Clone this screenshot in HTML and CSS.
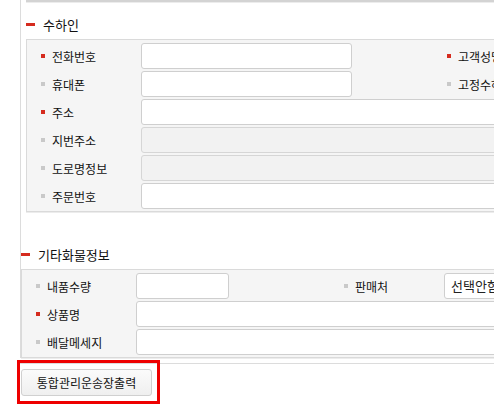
FILE: index.html
```html
<!DOCTYPE html>
<html lang="ko">
<head>
    <meta charset="UTF-8">
    <meta name="viewport" content="width=device-width, initial-scale=1.0">
    <title>수하인 정보</title>
    <link rel="stylesheet" href="styles.css">
</head>
<body>
    <div class="panel">
        <div class="topbar"></div>

        <div class="section section-inset">
            <h2 class="sec-title">수하인</h2>
            <div class="form-box">
                <div class="row">
                    <label class="lbl req">전화번호</label>
                    <div class="cell cell-phone"><input type="text" class="inp inp-phone"></div>
                    <label class="lbl req">고객성명</label>
                    <div class="cell"><input type="text" class="inp inp-wide"></div>
                </div>
                <div class="row">
                    <label class="lbl">휴대폰</label>
                    <div class="cell cell-phone"><input type="text" class="inp inp-phone"></div>
                    <label class="lbl">고정수하인</label>
                    <div class="cell"><input type="text" class="inp inp-wide"></div>
                </div>
                <div class="row">
                    <label class="lbl req">주소</label>
                    <div class="cell"><input type="text" class="inp inp-full"></div>
                </div>
                <div class="row">
                    <label class="lbl">지번주소</label>
                    <div class="cell"><input type="text" class="inp inp-full" disabled></div>
                </div>
                <div class="row">
                    <label class="lbl">도로명정보</label>
                    <div class="cell"><input type="text" class="inp inp-full" disabled></div>
                </div>
                <div class="row">
                    <label class="lbl">주문번호</label>
                    <div class="cell"><input type="text" class="inp inp-full"></div>
                </div>
            </div>
        </div>

        <div class="section">
            <h2 class="sec-title sec-title-lower">기타화물정보</h2>
            <div class="form-box">
                <div class="row">
                    <label class="lbl">내품수량</label>
                    <div class="cell cell-qty"><input type="text" class="inp inp-qty"></div>
                    <label class="lbl">판매처</label>
                    <div class="cell">
                        <select class="inp sel">
                            <option>선택안함</option>
                        </select>
                    </div>
                </div>
                <div class="row">
                    <label class="lbl req">상품명</label>
                    <div class="cell"><input type="text" class="inp inp-full"></div>
                </div>
                <div class="row">
                    <label class="lbl">배달메세지</label>
                    <div class="cell"><input type="text" class="inp inp-full"></div>
                </div>
            </div>
        </div>
    </div>

    <div class="footer">
        <span class="mark"></span>
        <button type="button" class="btn">통합관리운송장출력</button>
    </div>
</body>
</html>
```

FILE: styles.css
```css
html, body {
    overflow: hidden;
}

body {
    margin: 0;
    padding: 0;
    width: 494px;
    height: 417px;
    background-color: #ffffff;
    color: #111;
    font-family: "Noto Sans CJK KR", "Noto Sans", sans-serif;
    font-size: 12px;
}

.panel {
    margin-left: 20px;
    width: 700px;
    border-left: 1px solid #dcdcdc;
}

.topbar {
    margin-left: 5px;
    height: 2px;
    background-color: #d3d3d3;
    border-bottom: 1px solid #ececec;
}

.section-inset {
    margin-left: 5px;
}

.sec-title {
    display: flex;
    align-items: center;
    margin: 0;
    padding: 11px 0 5px;
    height: 20px;
    font-size: 13px;
    font-weight: normal;
    color: #111;
}

.sec-title::before {
    content: "";
    width: 9px;
    height: 3px;
    margin-right: 8px;
    background-color: #d52b1e;
}

.sec-title-lower {
    padding-top: 32px;
}

.form-box {
    padding: 2px 0 1px;
    background-color: #f5f5f5;
    border: 1px solid #dadada;
    border-right: none;
    box-shadow: 0 1px 0 #ececec;
}

.row {
    display: flex;
    align-items: center;
    height: 28px;
}

.lbl {
    display: flex;
    align-items: center;
    flex-shrink: 0;
    box-sizing: border-box;
    width: 114px;
    padding-left: 14px;
    font-size: 12px;
    color: #111;
    white-space: nowrap;
}

.lbl::before {
    content: "";
    width: 4px;
    height: 4px;
    margin-right: 7px;
    background-color: #c9c9c9;
}

.lbl.req::before {
    background-color: #d52b1e;
}

.cell {
    flex-shrink: 0;
}

.cell-phone {
    width: 292px;
}

.cell-qty {
    width: 194px;
}

.inp {
    display: block;
    box-sizing: border-box;
    height: 26px;
    margin: 0;
    padding: 0 6px;
    border: 1px solid #cfcfcf;
    border-radius: 3px;
    background-color: #ffffff;
    font-family: inherit;
    font-size: 13px;
    color: #222;
}

.inp:disabled {
    background-color: #f2f2f2;
    border-color: #d6d6d6;
}

.inp-phone {
    width: 211px;
}

.inp-qty {
    width: 93px;
}

.inp-wide {
    width: 200px;
}

.inp-full {
    width: 520px;
}

.sel {
    -webkit-appearance: none;
    appearance: none;
    width: 120px;
    padding-left: 6px;
    line-height: 24px;
}

.footer {
    position: relative;
    margin: 5px 0 0 20px;
    padding: 5px 0 0 1px;
    border-top: 1px solid #dcdcdc;
}

.btn {
    display: block;
    box-sizing: border-box;
    width: 131px;
    height: 27px;
    padding: 0;
    border: 1px solid #d0d0d0;
    border-radius: 3px;
    background: linear-gradient(#fbfbfb, #efefef);
    font-family: inherit;
    font-size: 12px;
    color: #111;
    cursor: pointer;
}

.mark {
    position: absolute;
    left: -3px;
    top: -4px;
    box-sizing: border-box;
    width: 143px;
    height: 44px;
    border: 3px solid #ee0000;
    pointer-events: none;
}
```
